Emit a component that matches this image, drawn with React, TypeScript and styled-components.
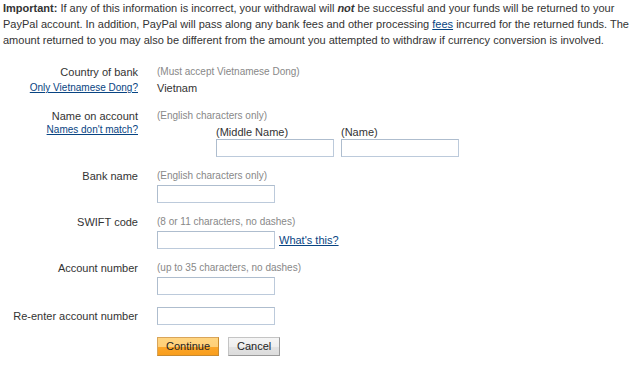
import React from "react";
import styled, { createGlobalStyle } from "styled-components";

const GlobalStyle = createGlobalStyle`
  body {
    margin: 0;
    background: #ffffff;
    font-family: "Liberation Sans", Arial, sans-serif;
    color: #333333;
  }
`;

const Page = styled.div`
  width: 640px;
  height: 373px;
  overflow: hidden;
`;

const Notice = styled.p`
  margin: 0;
  padding: 0 8px 0 3px;
  font-size: 11px;
  line-height: 16px;
  color: #333333;

  strong {
    font-weight: bold;
  }
  em {
    font-weight: bold;
    font-style: italic;
  }
`;

const Link = styled.a<{ $size?: number }>`
  color: #084482;
  text-decoration: underline;
  font-size: ${(p) => (p.$size ? `${p.$size}px` : "inherit")};
  cursor: pointer;
`;

const Form = styled.div`
  display: grid;
  grid-template-columns: 138px auto;
  column-gap: 19px;
  row-gap: 12px;
  margin-top: 17px;
`;

const LabelCell = styled.div<{ $center?: boolean }>`
  display: flex;
  flex-direction: column;
  align-items: flex-end;
  justify-content: ${(p) => (p.$center ? "center" : "flex-start")};
  text-align: right;
`;

const Label = styled.span`
  font-size: 11px;
  line-height: 14px;
  color: #333333;
  white-space: nowrap;
`;

const SideLink = styled(Link)<{ $tall?: boolean }>`
  font-size: 10px;
  line-height: ${(p) => (p.$tall ? "18px" : "14px")};
  white-space: nowrap;
`;

const ValueCell = styled.div`
  display: flex;
  flex-direction: column;
  align-items: flex-start;
`;

const Hint = styled.span`
  font-size: 10px;
  line-height: 14px;
  color: #888888;
  white-space: nowrap;
`;

const Value = styled.span`
  font-size: 11px;
  line-height: 18px;
  color: #333333;
`;

const NameGrid = styled.div`
  display: grid;
  grid-template-columns: 118px 118px;
  column-gap: 7px;
  padding-left: 59px;
  margin-top: 2px;
`;

const SubLabel = styled.span`
  font-size: 11px;
  line-height: 14px;
  color: #333333;
`;

const Field = styled.input<{ $gap?: number }>`
  box-sizing: border-box;
  width: 118px;
  height: 18px;
  margin: ${(p) => (p.$gap ? `${p.$gap}px` : "0")} 0 0 0;
  padding: 1px 3px;
  border: 1px solid #bccadb;
  border-top-color: #aebdce;
  border-left-color: #aebdce;
  background: #ffffff;
  font-family: "Liberation Sans", Arial, sans-serif;
  font-size: 11px;
  outline: none;
`;

const InlineRow = styled.div`
  display: flex;
  align-items: center;
  gap: 4px;
  margin-top: 2px;
`;

const Buttons = styled.div`
  display: flex;
  gap: 9px;
`;

const Button = styled.button<{ $primary?: boolean }>`
  box-sizing: border-box;
  height: 19px;
  padding: 0 8px;
  font-family: "Liberation Sans", Arial, sans-serif;
  font-size: 11px;
  line-height: 17px;
  color: #222222;
  cursor: pointer;
  border: 1px solid ${(p) => (p.$primary ? "#d9a55a" : "#c4c4c4")};
  border-right-color: ${(p) => (p.$primary ? "#c88a30" : "#9a9a9a")};
  border-bottom-color: ${(p) => (p.$primary ? "#c88a30" : "#9a9a9a")};
  background: ${(p) =>
    p.$primary
      ? "linear-gradient(to bottom, #ffd581 0%, #ffcf78 50%, #fba62a 52%, #f99e1c 100%)"
      : "linear-gradient(to bottom, #f5f5f5 0%, #eeeeee 50%, #e2e2e2 52%, #dcdcdc 100%)"};
`;

export default function App() {
  return (
    <Page>
      <GlobalStyle />
      <Notice>
        <strong>Important:</strong> If any of this information is incorrect, your withdrawal will{" "}
        <em>not</em> be successful and your funds will be returned to your PayPal account. In
        addition, PayPal will pass along any bank fees and other processing <Link>fees</Link>{" "}
        incurred for the returned funds. The amount returned to you may also be different from the
        amount you attempted to withdraw if currency conversion is involved.
      </Notice>

      <Form>
        <LabelCell>
          <Label>Country of bank</Label>
          <SideLink $tall>Only Vietnamese Dong?</SideLink>
        </LabelCell>
        <ValueCell>
          <Hint>(Must accept Vietnamese Dong)</Hint>
          <Value>Vietnam</Value>
        </ValueCell>

        <LabelCell>
          <Label>Name on account</Label>
          <SideLink>Names don't match?</SideLink>
        </LabelCell>
        <ValueCell>
          <Hint>(English characters only)</Hint>
          <NameGrid>
            <SubLabel>(Middle Name)</SubLabel>
            <SubLabel>(Name)</SubLabel>
            <Field />
            <Field />
          </NameGrid>
        </ValueCell>

        <LabelCell>
          <Label>Bank name</Label>
        </LabelCell>
        <ValueCell>
          <Hint>(English characters only)</Hint>
          <Field $gap={2} />
        </ValueCell>

        <LabelCell>
          <Label>SWIFT code</Label>
        </LabelCell>
        <ValueCell>
          <Hint>(8 or 11 characters, no dashes)</Hint>
          <InlineRow>
            <Field />
            <Link $size={11}>What's this?</Link>
          </InlineRow>
        </ValueCell>

        <LabelCell>
          <Label>Account number</Label>
        </LabelCell>
        <ValueCell>
          <Hint>(up to 35 characters, no dashes)</Hint>
          <Field $gap={2} />
        </ValueCell>

        <LabelCell $center>
          <Label>Re-enter account number</Label>
        </LabelCell>
        <ValueCell>
          <Field />
        </ValueCell>

        <div />
        <Buttons>
          <Button $primary>Continue</Button>
          <Button>Cancel</Button>
        </Buttons>
      </Form>
    </Page>
  );
}
